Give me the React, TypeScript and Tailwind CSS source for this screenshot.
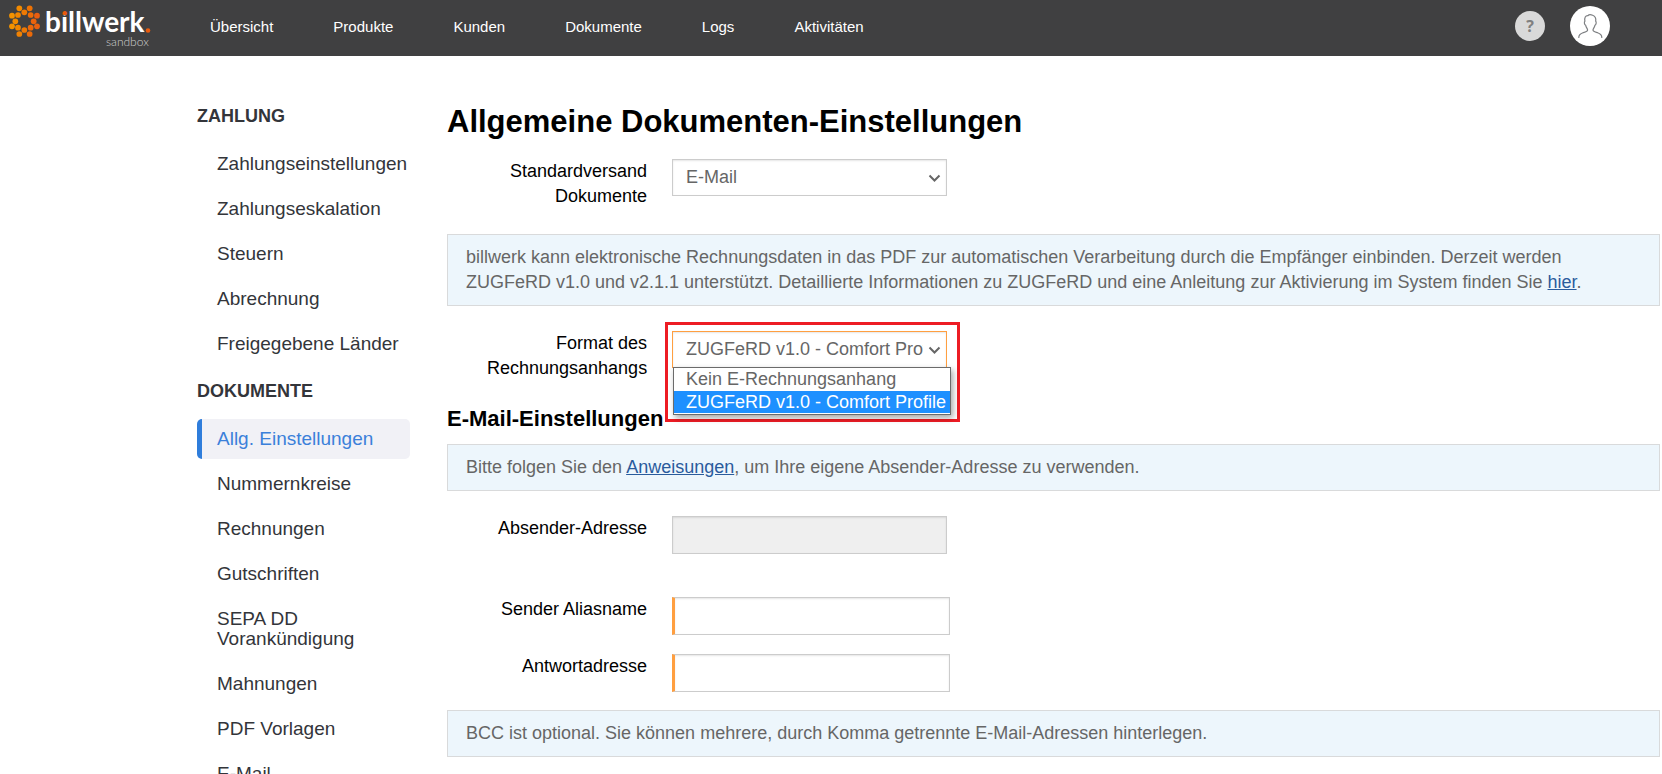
import type { ReactNode } from 'react';

const navItems = ['Übersicht', 'Produkte', 'Kunden', 'Dokumente', 'Logs', 'Aktivitäten'];

const sections = [
  {
    title: 'ZAHLUNG',
    items: ['Zahlungseinstellungen', 'Zahlungseskalation', 'Steuern', 'Abrechnung', 'Freigegebene Länder'],
  },
  {
    title: 'DOKUMENTE',
    items: [
      'Allg. Einstellungen',
      'Nummernkreise',
      'Rechnungen',
      'Gutschriften',
      'SEPA DD Vorankündigung',
      'Mahnungen',
      'PDF Vorlagen',
      'E-Mail',
    ],
  },
];

const activeItem = 'Allg. Einstellungen';

const logoDots = [
  [58, 25, '#f28a00'],
  [89, 25, '#ee7203'],
  [111, 47, '#e95d0f'],
  [111, 79, '#e9600f'],
  [89, 102, '#ec6a08'],
  [58, 102, '#f08203'],
  [36, 79, '#f39200'],
  [36, 47, '#f39200'],
  [73, 37, '#ee7a03'],
  [92, 45, '#ec6c08'],
  [101, 64, '#ea630c'],
  [92, 83, '#eb680a'],
  [73, 90, '#ee7803'],
  [54, 83, '#f08600'],
  [46, 64, '#f28c00'],
  [54, 45, '#f08600'],
] as const;

function Logo() {
  return (
    <svg width="160" height="56" viewBox="0 0 160 56" role="img" aria-label="billwerk sandbox">
      <defs>
        <linearGradient id="letterI" gradientUnits="userSpaceOnUse" x1="0" y1="0" x2="0" y2="56">
          <stop offset="0.275" stopColor="#ea5b0c" />
          <stop offset="0.275" stopColor="#fff" />
        </linearGradient>
      </defs>
      <g transform="scale(0.3333)">
        {logoDots.map(([x, y, fill]) => (
          <circle key={`${x}-${y}`} cx={x} cy={y} r="8.6" fill={fill} />
        ))}
      </g>
      <text x="45" y="32" fill="#fff" fontFamily="Lato, sans-serif" fontWeight="700" fontSize="28">
        b<tspan fill="url(#letterI)">i</tspan>llwerk
      </text>
      <circle cx="148" cy="30.500" r="2.300" fill="#ea5b0c" />
      <text x="106" y="46" fill="#d0d0d0" fontFamily="Lato, sans-serif" fontWeight="300" fontSize="12">
        sandbox
      </text>
    </svg>
  );
}

function Header() {
  return (
    <header className="flex h-14 shrink-0 items-center bg-[#404041] pr-[52px]">
      <a href="#start" className="mr-[50px] block w-40">
        <Logo />
      </a>
      <nav className="flex gap-[60px] pb-0.5 text-[15px] leading-5 text-white">
        {navItems.map((item) => (
          <a key={item} href="#nav">
            {item}
          </a>
        ))}
      </nav>
      <div className="ml-auto flex items-center gap-[25px] pb-1">
        <button
          type="button"
          aria-label="Hilfe"
          className="flex size-[30px] items-center justify-center rounded-full bg-[#d9d9d9] font-['Open_Sans',sans-serif] text-base leading-5 font-bold text-[#808080]"
        >
          ?
        </button>
        <button type="button" aria-label="Benutzerkonto" className="size-10 rounded-full bg-white">
          <svg width="40" height="40" viewBox="0 0 40 40" fill="none" stroke="#7d7f82" strokeWidth="1.2" strokeLinejoin="round" strokeLinecap="round">
            <path d="M8.800 31.500C8.800 28.500 10.500 27.500 13 26.700C15.500 26 17.600 25.500 17.600 24C17.600 22.600 16.200 21.700 15.700 19.300C14.300 18.700 14 16 14.900 15.300C14.200 11.500 15.500 9.500 18 9.700C19 8.200 26.800 8 25.700 15.300C26.600 16 26.200 18.700 24.900 19.300C24.400 21.700 23 22.600 23 24C23 25.500 25.100 26 27.600 26.700C30.100 27.500 31.800 28.500 31.800 31.500" />
          </svg>
        </button>
      </div>
    </header>
  );
}

function Sidebar() {
  return (
    <aside className="w-[213px] shrink-0 pt-12 text-[19px] text-[#33353a]">
      {sections.map((section) => (
        <section key={section.title} className="mb-[15px]">
          <h2 className="mb-[15px] text-lg leading-[25px] font-bold">{section.title}</h2>
          <ul className="flex flex-col gap-[5px]">
            {section.items.map((item) => (
              <li key={item}>
                <a
                  href="#settings"
                  className={
                    item === activeItem
                      ? 'block rounded-[5px] border-l-[5px] border-[#2f7ddb] bg-[#f1f1f6] py-[10px] pl-[15px] leading-5 text-[#3b80da]'
                      : 'block border-l-[5px] border-transparent py-[10px] pl-[15px] leading-5'
                  }
                >
                  {item}
                </a>
              </li>
            ))}
          </ul>
        </section>
      ))}
    </aside>
  );
}

function Info({ children }: { children: ReactNode }) {
  return <p className="border border-[#d9dadb] bg-[#edf6fc] px-[18px] py-[10px] text-[#666]">{children}</p>;
}

function Field({ id, label, children }: { id: string; label: string; children: ReactNode }) {
  return (
    <div className="flex items-start gap-[25px]">
      <label htmlFor={id} className="w-[200px] pl-10 text-right text-black">
        {label}
      </label>
      {children}
    </div>
  );
}

function Chevron() {
  return (
    <svg
      className="pointer-events-none absolute top-[15px] right-[6px]"
      width="13"
      height="9"
      viewBox="0 0 13 9"
      fill="none"
      stroke="#666"
      strokeWidth="2"
    >
      <path d="M1.500 1.500L6.500 6.500L11.500 1.500" />
    </svg>
  );
}

const selectClass =
  'block h-[37px] w-full appearance-none border bg-white pr-[23px] pl-[13px] text-[#666] shadow-[inset_0_1px_2px_rgba(0,0,0,0.1)] outline-none';
const inputClass = 'block h-[38px] border border-[#ccc] px-[13px] shadow-[inset_0_1px_2px_rgba(0,0,0,0.1)]';

export default function App() {
  return (
    <div className="flex h-screen flex-col overflow-hidden bg-white font-['Liberation_Sans',Arial,sans-serif]">
      <Header />
      <div className="flex min-h-0 flex-1 pr-[2px] pl-[197px]">
        <Sidebar />
        <main className="ml-[37px] min-w-0 flex-1 pt-[46px] text-lg leading-[25px]">
          <h1 className="mb-[17px] text-[31px] leading-10 font-bold text-black">Allgemeine Dokumenten-Einstellungen</h1>

          <Field id="delivery" label="Standardversand Dokumente">
            <div className="relative w-[275px]">
              <select id="delivery" className={`${selectClass} border-[#ccc]`}>
                <option>E-Mail</option>
              </select>
              <Chevron />
            </div>
          </Field>

          <div className="my-[25px]">
            <Info>
              billwerk kann elektronische Rechnungsdaten in das PDF zur automatischen Verarbeitung durch die Empfänger
              einbinden. Derzeit werden
              <br />
              ZUGFeRD v1.0 und v2.1.1 unterstützt. Detaillierte Informationen zu ZUGFeRD und eine Anleitung zur
              Aktivierung im System finden Sie{' '}
              <a href="#hier" className="text-[#2a5b9c] underline">
                hier
              </a>
              .
            </Info>
          </div>

          <Field id="format" label="Format des Rechnungsanhangs">
            <div className="relative w-[275px]">
              <select id="format" className={`${selectClass} border-[#ff9f40]`}>
                <option>ZUGFeRD v1.0 - Comfort Profile</option>
                <option>Kein E-Rechnungsanhang</option>
              </select>
              <Chevron />
              <ul
                role="listbox"
                aria-label="Format des Rechnungsanhangs"
                className="absolute top-9 left-px z-10 w-[278px] border border-[#6b6b6b] bg-white pb-px leading-[22px] text-[#666] shadow-[2px_3px_6px_rgba(0,0,0,0.35)]"
              >
                <li role="option" aria-selected="false" className="pb-px pl-3">
                  Kein E-Rechnungsanhang
                </li>
                <li role="option" aria-selected="true" className="bg-[#1e90ff] pl-3 whitespace-nowrap text-white">
                  ZUGFeRD v1.0 - Comfort Profile
                </li>
              </ul>
              <div className="pointer-events-none absolute -top-[9px] -left-[7px] h-[100px] w-[295px] border-[3px] border-[#ed1c24]" />
            </div>
          </Field>

          <h2 className="mt-[25px] mb-[13px] text-[22px] font-bold text-black">E-Mail-Einstellungen</h2>

          <Info>
            Bitte folgen Sie den{' '}
            <a href="#anweisungen" className="text-[#2a5b9c] underline">
              Anweisungen
            </a>
            , um Ihre eigene Absender-Adresse zu verwenden.
          </Info>

          <div className="mt-[25px] mb-[43px]">
            <Field id="sender" label="Absender-Adresse">
              <input id="sender" type="text" disabled className={`${inputClass} w-[275px] bg-[#efefef]`} />
            </Field>
          </div>

          <div className="mb-[18px] flex flex-col gap-[19px]">
            <Field id="alias" label="Sender Aliasname">
              <input id="alias" type="text" className={`${inputClass} w-[278px] border-l-[3px] border-l-[#ff9f40] bg-white`} />
            </Field>
            <Field id="reply" label="Antwortadresse">
              <input id="reply" type="text" className={`${inputClass} w-[278px] border-l-[3px] border-l-[#ff9f40] bg-white`} />
            </Field>
          </div>

          <Info>BCC ist optional. Sie können mehrere, durch Komma getrennte E-Mail-Adressen hinterlegen.</Info>
        </main>
      </div>
    </div>
  );
}
